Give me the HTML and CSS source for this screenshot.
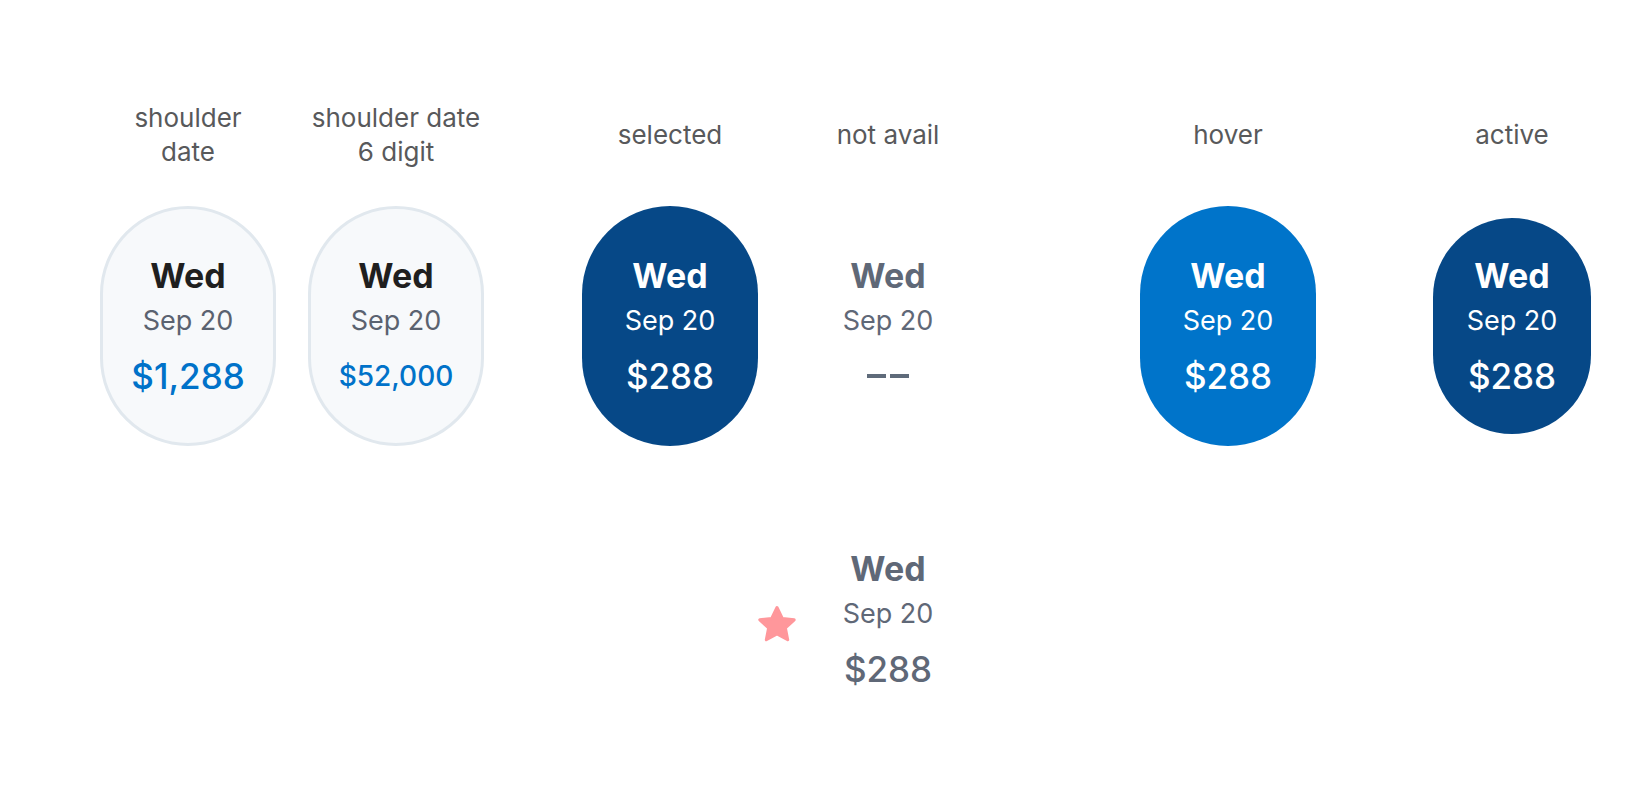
FILE: index.html
```html
<!DOCTYPE html>
<html lang="en">
<head>
<meta charset="utf-8">
<title>Date pill states</title>
<link rel="stylesheet" href="styles.css">
</head>
<body>
<main class="board">
  <section class="states">
    <div class="col">
      <div class="label">shoulder<br>date</div>
      <div class="pill pill-shoulder">
        <span class="day">Wed</span>
        <span class="date">Sep 20</span>
        <span class="price">$1,288</span>
      </div>
    </div>
    <div class="col col-2">
      <div class="label">shoulder date<br>6 digit</div>
      <div class="pill pill-shoulder">
        <span class="day">Wed</span>
        <span class="date">Sep 20</span>
        <span class="price price-long">$52,000</span>
      </div>
    </div>
    <div class="col col-3">
      <div class="label">selected</div>
      <div class="pill pill-selected">
        <span class="day">Wed</span>
        <span class="date">Sep 20</span>
        <span class="price">$288</span>
      </div>
    </div>
    <div class="col col-4">
      <div class="label">not avail</div>
      <div class="pill pill-na">
        <span class="day">Wed</span>
        <span class="date">Sep 20</span>
        <span class="price price-none"><i class="dash"></i><i class="dash"></i></span>
      </div>
    </div>
    <div class="col col-5">
      <div class="label">hover</div>
      <div class="pill pill-hover">
        <span class="day">Wed</span>
        <span class="date">Sep 20</span>
        <span class="price">$288</span>
      </div>
    </div>
    <div class="col col-6">
      <div class="label">active</div>
      <div class="pill-slot">
        <div class="pill pill-active">
          <span class="day">Wed</span>
          <span class="date">Sep 20</span>
          <span class="price">$288</span>
        </div>
      </div>
    </div>
  </section>
  <section class="legend">
    <svg class="star" viewBox="0 0 40 38" aria-hidden="true">
      <path d="M20 2.5 L25.3 13.4 L37.2 14.8 L28.4 23 L30.7 34.8 L20 29 L9.3 34.8 L11.6 23 L2.8 14.8 L14.7 13.4 Z" fill="#ff979b" stroke="#ff979b" stroke-width="3" stroke-linejoin="round"/>
    </svg>
    <div class="pill pill-plain">
      <span class="day">Wed</span>
      <span class="date">Sep 20</span>
      <span class="price">$288</span>
    </div>
  </section>
</main>
</body>
</html>
```
FILE: styles.css
```css
html, body {
  margin: 0;
  padding: 0;
  background: #ffffff;
}

body {
  font-family: Inter, "Noto Sans", sans-serif;
  width: 1644px;
  height: 796px;
  overflow: hidden;
}

.board {
  display: flex;
  flex-direction: column;
  padding-top: 101px;
}

.states {
  display: flex;
  padding-left: 100px;
}

.col {
  width: 176px;
  display: flex;
  flex-direction: column;
  align-items: center;
}

.col-2 { margin-left: 32px; }
.col-3 { margin-left: 98px; }
.col-4 { margin-left: 42px; }
.col-5 { margin-left: 164px; }
.col-6 { margin-left: 108px; }

.label {
  height: 68px;
  display: flex;
  align-items: center;
  justify-content: center;
  text-align: center;
  white-space: nowrap;
  font-size: 26px;
  line-height: 34px;
  color: #58595b;
  margin-bottom: 37px;
}

.pill {
  box-sizing: border-box;
  width: 176px;
  height: 240px;
  border-radius: 88px;
  padding-top: 8px;
  display: flex;
  flex-direction: column;
  align-items: center;
  justify-content: center;
  color: #5f6877;
}

.pill-slot {
  width: 176px;
  height: 240px;
  display: flex;
  align-items: center;
  justify-content: center;
}

.day {
  font-size: 34px;
  font-weight: 700;
  line-height: 40px;
}

.date {
  font-size: 27px;
  line-height: 44px;
  margin-top: 3px;
}

.price {
  font-size: 35px;
  font-weight: 500;
  line-height: 56px;
  margin-top: 5px;
  height: 56px;
  display: flex;
  align-items: center;
}

.pill-shoulder {
  background: #f7f9fb;
  border: 3px solid #e1e8ee;
}
.pill-shoulder .day { color: #1f1f1f; }
.pill-shoulder .date { color: #5a6270; }
.pill-shoulder .price { color: #0072c9; }
.pill-shoulder .price-long { font-size: 28px; font-weight: 500; }

.pill-selected,
.pill-active {
  background: #064887;
  color: #ffffff;
}

.pill-hover {
  background: #0074ca;
  color: #ffffff;
}

.pill-active {
  width: 158px;
  height: 216px;
  border-radius: 79px;
}

.pill-na .day,
.pill-plain .day { color: #5f6877; }
.pill-na .date,
.pill-plain .date { color: #5f6877; }
.pill-plain .price { color: #5f6877; }

.price-none {
  gap: 4px;
}

.dash {
  display: block;
  width: 19px;
  height: 4px;
  background: #5f6b7a;
}

.legend {
  display: flex;
  align-items: center;
  padding-left: 757px;
  margin-top: 73px;
}

.star {
  width: 40px;
  height: 38px;
  margin-top: 10px;
  margin-right: 3px;
}

.pill-plain {
  height: 200px;
}
```
